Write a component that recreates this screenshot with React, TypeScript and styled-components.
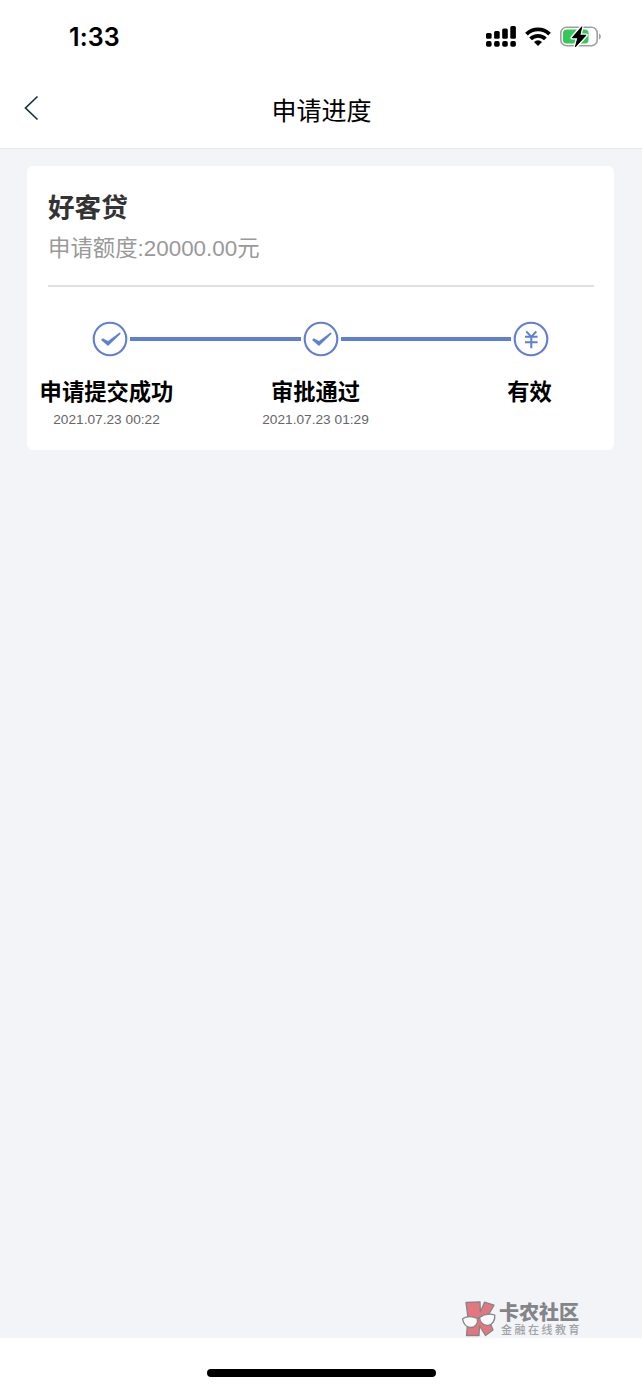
import React from "react";
import styled, { createGlobalStyle } from "styled-components";

const BLUE = "#5f7fd3";

const GlobalStyle = createGlobalStyle`
  * { box-sizing: border-box; }
  body {
    margin: 0;
    background: #fff;
    font-family: "Liberation Sans", "Noto Sans CJK SC", sans-serif;
    color: #000;
  }
`;

const Screen = styled.div`
  display: flex;
  flex-direction: column;
  width: 642px;
  height: 1389px;
  overflow: hidden;
`;

const StatusBar = styled.div`
  display: flex;
  justify-content: space-between;
  align-items: center;
  flex: none;
  height: 73px;
  padding: 0 41px 0 69px;
`;

const Clock = styled.div`
  font: 600 25px/30px Inter, sans-serif;
  letter-spacing: 0.1px;
`;

const StatusIcons = styled.div`
  display: flex;
  align-items: center;
  gap: 9px;
  svg { display: block; }
`;

const NavBar = styled.header`
  display: grid;
  grid-template-columns: 60px 1fr 60px;
  align-items: center;
  flex: none;
  height: 76px;
  border-bottom: 1px solid #e6e7ea;
`;

const BackButton = styled.button`
  border: 0;
  padding: 0 0 6px 23px;
  background: none;
  text-align: left;
  svg { display: block; }
`;

const NavTitle = styled.h1`
  margin: 0;
  padding-left: 1px;
  text-align: center;
  font-size: 25px;
  line-height: 36px;
  font-weight: 400;
`;

const Content = styled.main`
  display: flex;
  flex-direction: column;
  justify-content: space-between;
  flex: none;
  height: 1189px;
  padding: 17px 28px 0 27px;
  background: #f2f4f8;
`;

const Card = styled.section`
  height: 284px;
  border-radius: 6px;
  background: #fff;
`;

const CardHead = styled.div`
  height: 121px;
  margin: 0 20px 0 21px;
  padding-top: 23px;
  border-bottom: 2px solid #e0e0e0;
`;

const ProductName = styled.h2`
  margin: 0;
  font-size: 26.6px;
  line-height: 38px;
  font-weight: 700;
  color: #333;
`;

const Amount = styled.div`
  margin-top: 5px;
  font-size: 22.4px;
  line-height: 34px;
  color: #999;
  white-space: nowrap;
`;

const Track = styled.div`
  display: flex;
  align-items: center;
  height: 36px;
  margin: 34px 65px 0;
  svg { display: block; flex: none; }
`;

const Connector = styled.div`
  flex: 1;
  height: 4px;
  margin: 0 2px;
  background: ${BLUE};
`;

const Labels = styled.div`
  display: grid;
  grid-template-columns: 159px 259px 169px;
  margin-top: 20px;
`;

const Step = styled.div`
  text-align: center;
  white-space: nowrap;
`;

const StepName = styled.div`
  font-size: 22.3px;
  line-height: 32px;
  font-weight: 700;
`;

const StepTime = styled.div`
  margin-top: 3px;
  font-size: 13.7px;
  line-height: 16px;
  color: #666;
`;

const Brand = styled.div`
  display: flex;
  align-self: flex-end;
  gap: 3px;
  width: 153px;
  height: 38px;
  svg { display: block; flex: none; }
`;

const BrandName = styled.div`
  margin-top: 2px;
  font-size: 20px;
  line-height: 22px;
  font-weight: 900;
  color: #858589;
  white-space: nowrap;
`;

const BrandTag = styled.div`
  padding-left: 2px;
  font-size: 11px;
  line-height: 12px;
  font-weight: 500;
  letter-spacing: 2.5px;
  color: #a0a1a5;
  white-space: nowrap;
`;

const HomeArea = styled.footer`
  display: flex;
  justify-content: center;
  flex: 1;
  padding: 31px 0 0 1px;
`;

const HomeBar = styled.div`
  width: 229px;
  height: 8px;
  border-radius: 4px;
  background: #000;
`;

const SignalIcon = () => (
  <svg width="30" height="22" viewBox="0 0 30 22">
    {[7, 5, 2.5, 0].map((top, i) => (
      <g key={top}>
        <rect x={i * 8.1} y={top} width="5.6" height={12.7 - top} rx="1.5" />
        <rect x={i * 8.1} y="15.1" width="5.6" height="5.7" rx="1.8" />
      </g>
    ))}
  </svg>
);

const WifiIcon = () => (
  <svg width="26" height="20" viewBox="0 0 26 20">
    <g fill="none" stroke="#000" strokeWidth="3.8">
      <path d="M1.5 7.2a16.3 16.3 0 0 1 23 0" />
      <path d="M5.6 11.900a10.400 10.400 0 0 1 14.800 0" />
    </g>
    <path d="M13 19l-4-4.100a5.800 5.800 0 0 1 8 0z" />
  </svg>
);

const BatteryIcon = () => (
  <svg width="41" height="24" viewBox="0 0 41 24">
    <rect x="0.8" y="2.3" width="36.400" height="18.400" rx="5.800" fill="#fff" stroke="#a0a0a0" strokeWidth="1.600" />
    <path d="M39 8.500v6c2.400-.8 2.400-5.200 0-6z" fill="#a0a0a0" />
    <rect x="3" y="4.500" width="25.500" height="14" rx="3.500" fill="#34c759" />
    <path d="M21.800 1.700L12.200 12.800h5.600L15.300 22 26 10.200h-6.100z" fill="#000" stroke="#fff" strokeWidth="3.600" paintOrder="stroke" strokeLinejoin="round" />
    <path d="M21.800 1.700L12.200 12.800h5.600L15.300 22 26 10.200h-6.100z" stroke="#000" strokeWidth=".8" strokeLinejoin="round" />
  </svg>
);

const StepRing = ({ children }: { children: React.ReactNode }) => (
  <svg width="36" height="36" viewBox="0 0 36 36" fill="none" stroke={BLUE}>
    <circle cx="18" cy="18" r="16.3" strokeWidth="2.1" />
    {children}
  </svg>
);

const Check = () => (
  <path d="M9.300 18.900l1.500-1.500 5.300 2.900L27.500 11.800l1 .9L16 24.700z" fill={BLUE} stroke={BLUE} strokeWidth=".4" />
);

const Yuan = () => (
  <path d="M13.300 10.300l5 5.500 5-5.500M12 15.800h12.600M12 21.200h12.600M18.300 15.500v11.800" strokeWidth="2" />
);

const BrandMark = () => (
  <svg width="35" height="38" viewBox="0 0 35 38" stroke="#858589" strokeLinejoin="round">
    <path d="M5 2.500l14-.7.3 10.200L23.500 2.200l9.500 3-6.500 11.300 5.500 13.500-7.500 5.500-6-9.500-.5 9.500H5.500L7 18z" fill="#e3777f" strokeWidth="1.300" />
    <path d="M1.500 18.700c4-2.500 10-2.500 14.700-.4 1.300 4.800-1.700 9.200-6.200 9.200-4.300 0-7.700-3.500-8.500-8.800zM18.500 17.500c4.500-3.300 10-4.200 15.300-2.500.4 5-2 9.700-6.700 10.300-4.600.5-8.100-2.800-8.600-7.800z" fill="#f9fafc" strokeWidth="1.300" />
    <path d="M16.200 18.600l2.300-.6" fill="none" strokeWidth="1.300" />
  </svg>
);

export default function App() {
  return (
    <Screen>
      <GlobalStyle />
      <StatusBar>
        <Clock>1:33</Clock>
        <StatusIcons>
          <SignalIcon />
          <WifiIcon />
          <BatteryIcon />
        </StatusIcons>
      </StatusBar>
      <NavBar>
        <BackButton aria-label="返回">
          <svg width="16" height="26" viewBox="0 0 16 26" fill="none" stroke="#17333f" strokeWidth="1.700">
            <path d="M14.500 1.500L2.500 13l12 11.500" />
          </svg>
        </BackButton>
        <NavTitle>申请进度</NavTitle>
      </NavBar>
      <Content>
        <Card>
          <CardHead>
            <ProductName>好客贷</ProductName>
            <Amount>申请额度:20000.00元</Amount>
          </CardHead>
          <Track>
            <StepRing><Check /></StepRing>
            <Connector />
            <StepRing><Check /></StepRing>
            <Connector />
            <StepRing><Yuan /></StepRing>
          </Track>
          <Labels>
            <Step>
              <StepName>申请提交成功</StepName>
              <StepTime>2021.07.23 00:22</StepTime>
            </Step>
            <Step>
              <StepName>审批通过</StepName>
              <StepTime>2021.07.23 01:29</StepTime>
            </Step>
            <Step>
              <StepName>有效</StepName>
            </Step>
          </Labels>
        </Card>
        <Brand>
          <BrandMark />
          <div>
            <BrandName>卡农社区</BrandName>
            <BrandTag>金融在线教育</BrandTag>
          </div>
        </Brand>
      </Content>
      <HomeArea>
        <HomeBar />
      </HomeArea>
    </Screen>
  );
}
